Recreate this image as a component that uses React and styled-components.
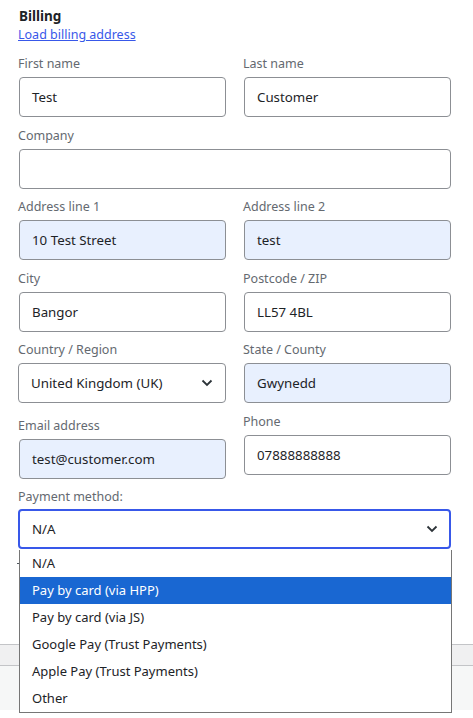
import React from 'react'
import styled, { createGlobalStyle } from 'styled-components'

const GlobalStyle = createGlobalStyle`
  html, body {
    margin: 0;
    padding: 0;
    background: #fff;
  }
  body {
    font-family: "Noto Sans", "Open Sans", sans-serif;
    color: #2c3338;
  }
`

const Page = styled.div`
  width: 473px;
  height: 718px;
  overflow: hidden;
  background: #fff;
`

const Section = styled.div`
  padding: 7px 22px 0 19px;
`

const Heading = styled.h3`
  margin: 0;
  font-size: 13.5px;
  font-weight: 700;
  line-height: 19px;
  color: #1d2327;
`

const LoadLink = styled.a`
  display: block;
  font-size: 12.5px;
  line-height: 18px;
  color: #3858e9;
  text-decoration: underline;
  margin-bottom: 11px;
  margin-left: -1px;
`

const Grid = styled.div`
  display: grid;
  grid-template-columns: 207px 207px;
  column-gap: 18px;
  align-items: start;
`

const Field = styled.div`
  grid-column: ${p => (p.$wide ? '1 / -1' : 'auto')};
  margin-top: ${p => p.$shift || 0}px;
  margin-bottom: 9.5px;
  position: relative;
`

const Label = styled.label`
  display: block;
  font-size: 12.5px;
  line-height: 18px;
  color: #646970;
  margin: 0 0 4px -1px;
`

const Input = styled.div`
  box-sizing: border-box;
  height: 40px;
  border: 1px solid #8c8f94;
  border-radius: 4px;
  background: ${p => (p.$filled ? '#e8f0fe' : '#fff')};
  padding: 0 12px;
  display: flex;
  align-items: center;
  font-size: 13.3px;
  color: #1d2327;
`

const SelectBox = styled.div`
  box-sizing: border-box;
  height: 40px;
  margin-left: -1px;
  margin-top: ${p => (p.$focus ? '-1px' : '0')};
  border: ${p => (p.$focus ? '2px solid #3858e9' : '1px solid #8c8f94')};
  border-radius: 4px;
  background: #fff;
  padding: 0 ${p => (p.$focus ? '11px' : '12px')};
  display: flex;
  align-items: center;
  justify-content: space-between;
  font-size: 13.3px;
  color: #1d2327;
  span {
    margin-left: ${p => (p.$focus ? '1px' : '0')};
  }
`

const Chevron = () => (
  <svg width="12" height="8" viewBox="0 0 12 8" fill="none">
    <polyline points="1.5,1.5 6,6 10.5,1.5" stroke="#2c3338" strokeWidth="1.8" />
  </svg>
)

/* a sliver of the field hidden under the open list */
const Tick = styled.div`
  width: 4px;
  height: 1px;
  margin: 14px 0 8px -2px;
  background: #50575e;
`

const Options = styled.ul`
  position: absolute;
  top: 62px;
  left: 0;
  right: -1px;
  margin: 0;
  padding: 0;
  list-style: none;
  background: #fff;
  border: 1px solid #767676;
  border-top: none;
  z-index: 5;
`

const Option = styled.li`
  height: 27px;
  line-height: 27px;
  padding-left: 12px;
  font-size: 13px;
  background: ${p => (p.$active ? '#1967d2' : '#fff')};
  color: ${p => (p.$active ? '#fff' : '#1d2327')};
`

const Footer = styled.div`
  margin-top: 62px;
  height: 20px;
  border-top: 1px solid #c3c4c7;
  border-bottom: 1px solid #c3c4c7;
  background: #f0f0f1;
`

const FooterBody = styled.div`
  height: 44px;
  background: #f6f7f7;
`

const paymentOptions = [
  'N/A',
  'Pay by card (via HPP)',
  'Pay by card (via JS)',
  'Google Pay (Trust Payments)',
  'Apple Pay (Trust Payments)',
  'Other',
]

const fields = [
  { label: 'First name', value: 'Test' },
  { label: 'Last name', value: 'Customer' },
  { label: 'Company', value: '', wide: true },
  { label: 'Address line 1', value: '10 Test Street', filled: true },
  { label: 'Address line 2', value: 'test', filled: true },
  { label: 'City', value: 'Bangor' },
  { label: 'Postcode / ZIP', value: 'LL57 4BL' },
]

export default function App() {
  return (
    <Page>
      <GlobalStyle />
      <Section>
        <Heading>Billing</Heading>
        <LoadLink href="#">Load billing address</LoadLink>
        <Grid>
          {fields.map(f => (
            <Field key={f.label} $wide={f.wide}>
              <Label>{f.label}</Label>
              <Input $filled={f.filled}>{f.value}</Input>
            </Field>
          ))}
          <Field>
            <Label>Country / Region</Label>
            <SelectBox>
              <span>United Kingdom (UK)</span>
              <Chevron />
            </SelectBox>
          </Field>
          <Field>
            <Label>State / County</Label>
            <Input $filled>Gwynedd</Input>
          </Field>
          <Field $shift={4}>
            <Label>Email address</Label>
            <Input $filled>test@customer.com</Input>
          </Field>
          <Field>
            <Label>Phone</Label>
            <Input>07888888888</Input>
          </Field>
          <Field $wide>
            <Label>Payment method:</Label>
            <SelectBox $focus>
              <span>N/A</span>
              <Chevron />
            </SelectBox>
            <Tick />
            <Options>
              {paymentOptions.map(o => (
                <Option key={o} $active={o === 'Pay by card (via HPP)'}>
                  {o}
                </Option>
              ))}
            </Options>
          </Field>
        </Grid>
      </Section>
      <Footer />
      <FooterBody />
    </Page>
  )
}
